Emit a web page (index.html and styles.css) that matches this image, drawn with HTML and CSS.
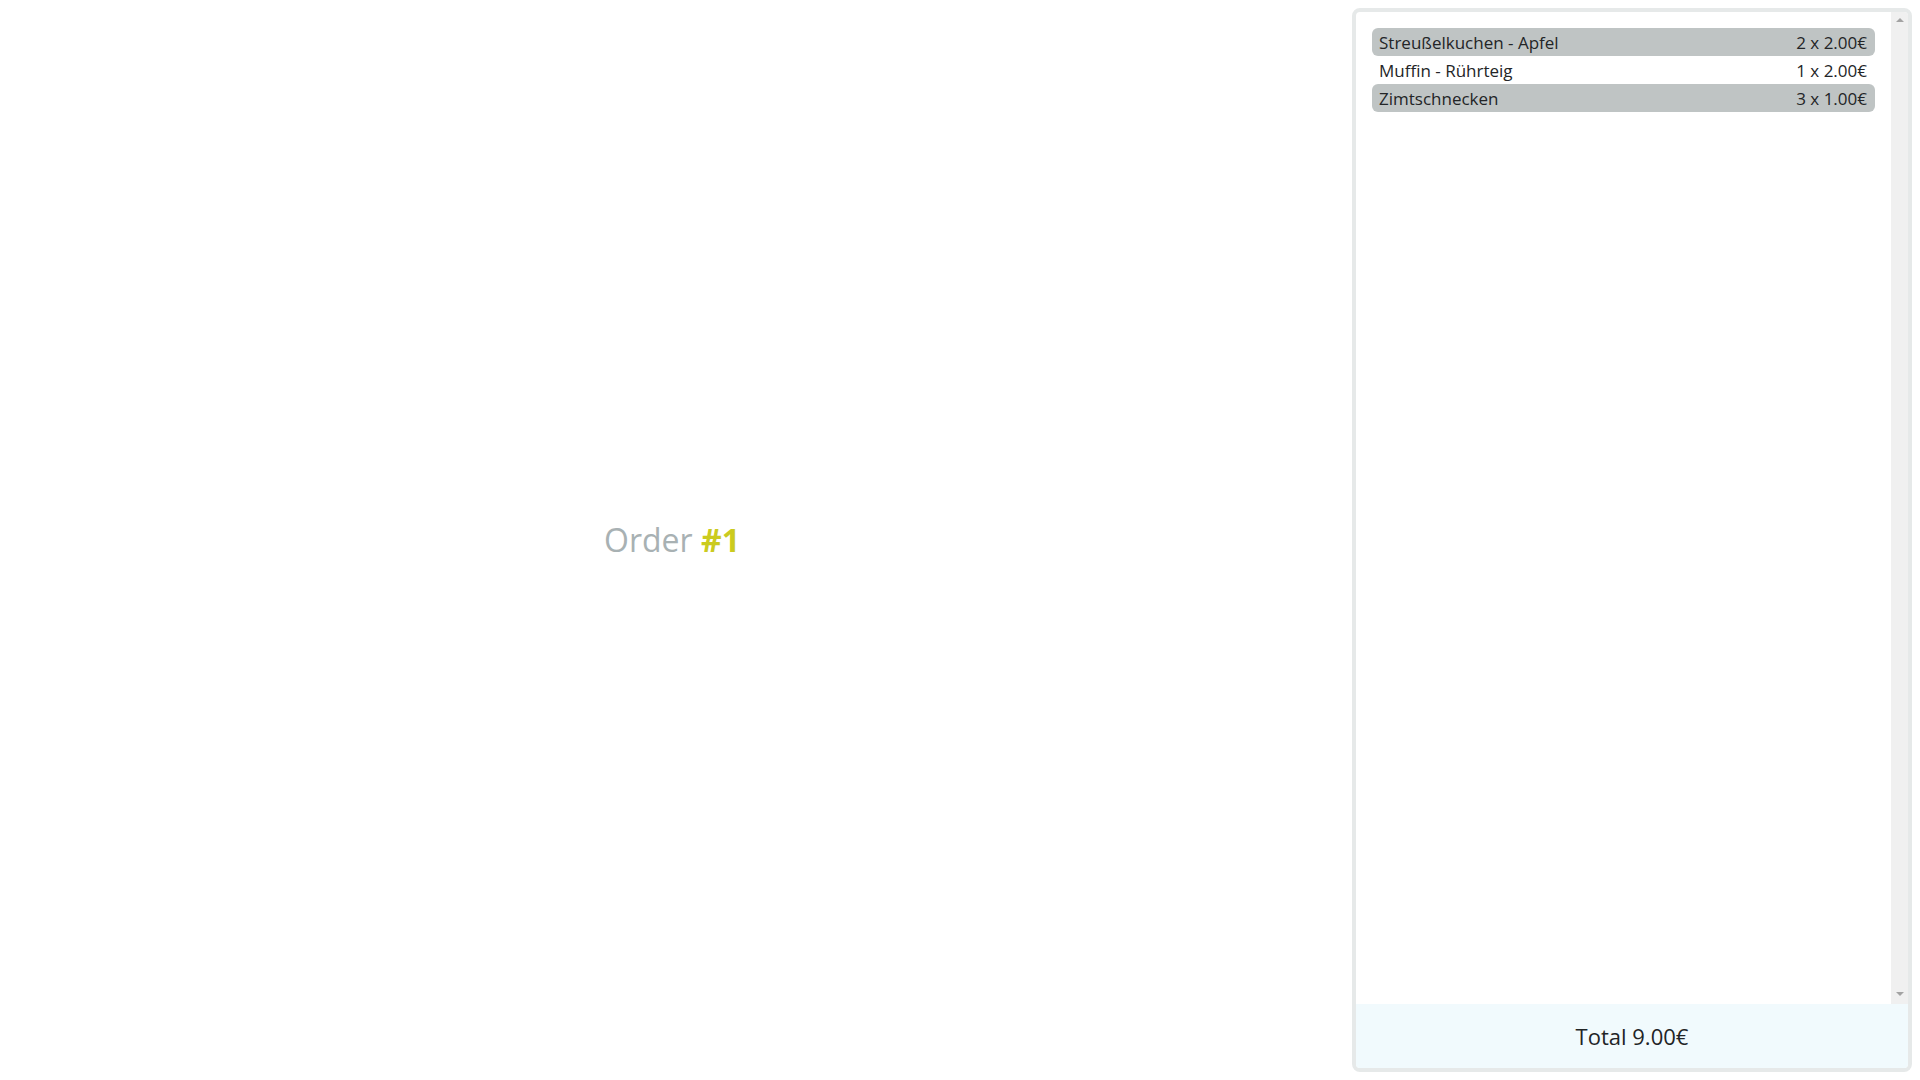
FILE: index.html
```html
<!DOCTYPE html>
<html lang="de">
<head>
<meta charset="utf-8">
<title>Order</title>
<link rel="stylesheet" href="styles.css">
</head>
<body>
<div class="app">
  <main class="stage">
    <h1 class="order-title">Order <span class="order-num">#1</span></h1>
  </main>
  <aside class="panel">
    <div class="scroll">
      <ul class="items">
        <li class="item item-alt"><span>Streußelkuchen - Apfel</span><span>2 x 2.00€</span></li>
        <li class="item"><span>Muffin - Rührteig</span><span>1 x 2.00€</span></li>
        <li class="item item-alt"><span>Zimtschnecken</span><span>3 x 1.00€</span></li>
      </ul>
      <div class="scrollbar">
        <span class="arrow arrow-up"></span>
        <span class="arrow arrow-down"></span>
      </div>
    </div>
    <div class="total">Total 9.00€</div>
  </aside>
</div>
</body>
</html>
```
FILE: styles.css
```css
* { box-sizing: border-box; }
html, body {
  margin: 0;
  padding: 0;
  background: #ffffff;
  font-family: "Open Sans", "Noto Sans", sans-serif;
  color: #222426;
}
.app {
  display: flex;
  width: 1920px;
  height: 1080px;
}
.stage {
  flex: 1;
  display: flex;
  align-items: center;
  justify-content: center;
}
.order-title {
  margin: 0;
  font-size: 32px;
  font-weight: 400;
  color: #a8b1b3;
  line-height: 1;
  padding-left: 0;
}
.order-num {
  font-weight: 700;
  color: #cbcb1f;
}
.panel {
  width: 560px;
  margin: 8px;
  border: 4px solid #e6e9e9;
  border-radius: 8px;
  display: flex;
  flex-direction: column;
  overflow: hidden;
}
.scroll {
  flex: 1;
  display: flex;
  min-height: 0;
}
.items {
  flex: 1;
  list-style: none;
  margin: 0;
  padding: 16px;
}
.item {
  display: flex;
  justify-content: space-between;
  height: 28px;
  align-items: center;
  padding: 0 8px 0 7px;
  font-size: 17px;
  border-radius: 6px;
  color: #232527;
}
.item-alt {
  background: #bfc4c4;
}
.scrollbar {
  width: 17px;
  background: #f0f0f0;
  display: flex;
  flex-direction: column;
  justify-content: space-between;
  align-items: center;
  padding: 6px 0 8px;
}
.arrow {
  width: 0;
  height: 0;
  border-left: 4px solid transparent;
  border-right: 4px solid transparent;
}
.arrow-up { border-bottom: 4px solid #a3a3a3; }
.arrow-down { border-top: 4px solid #a3a3a3; }
.total {
  height: 64px;
  background: #f1fafd;
  display: flex;
  align-items: center;
  justify-content: center;
  font-size: 22px;
  color: #222426;
}
```
